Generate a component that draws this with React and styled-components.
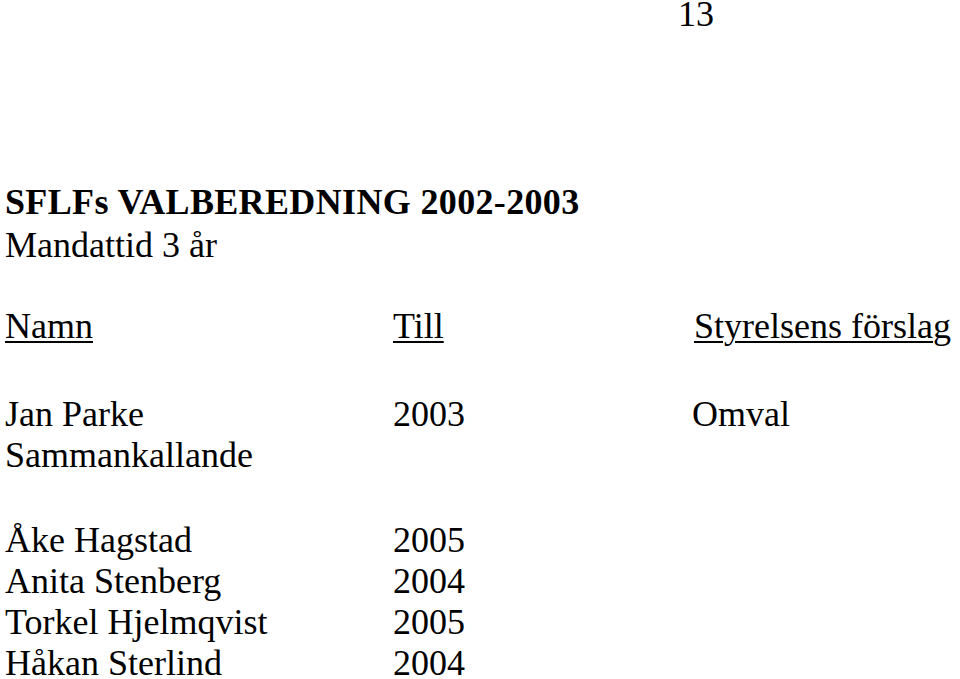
import React from "react";
import styled, { createGlobalStyle } from "styled-components";

const GlobalStyle = createGlobalStyle`
    html, body {
        margin: 0;
        padding: 0;
        background: #ffffff;
    }
    body {
        color: #000000;
        font-family: "Liberation Serif", "Times New Roman", serif;
        font-size: 36px;
        line-height: 41px;
        overflow: hidden;
    }
`;

const Page = styled("div")`
    height: 679px;
    overflow: hidden;
    padding-left: 5px;
    width: 955px;
`;

const PageNumber = styled("div")`
    margin-left: 673px;
    margin-top: -6px;
`;

const Title = styled("h1")`
    font-size: 36px;
    font-weight: bold;
    letter-spacing: 0.35px;
    line-height: 41px;
    margin: 147px 0 0 0;
`;

const Subtitle = styled("p")`
    margin: 2px 0 0 0;
`;

const Row = styled("div")`
    display: grid;
    grid-template-columns: 388px 299px auto;
    margin-top: ${(props) => props.gap || "0px"};
    white-space: nowrap;
`;

const Cell = styled("div")`
    padding-left: ${(props) => props.indent || "0px"};
`;

const HeadCell = styled(Cell)`
    text-decoration: underline;
    text-decoration-thickness: 2px;
    text-underline-offset: 3px;
`;

const ledamoter = [
    { namn: "Åke Hagstad", till: "2005" },
    { namn: "Anita Stenberg", till: "2004" },
    { namn: "Torkel Hjelmqvist", till: "2005" },
    { namn: "Håkan Sterlind", till: "2004" },
];

const App = () => {
    return (
        <>
            <GlobalStyle />
            <Page>
                <PageNumber>13</PageNumber>
                <Title>SFLFs VALBEREDNING 2002-2003</Title>
                <Subtitle>Mandattid 3 år</Subtitle>
                <Row gap="40px">
                    <HeadCell>Namn</HeadCell>
                    <HeadCell>Till</HeadCell>
                    <HeadCell indent="2px">Styrelsens förslag</HeadCell>
                </Row>
                <Row gap="47px">
                    <Cell>Jan Parke</Cell>
                    <Cell>2003</Cell>
                    <Cell>Omval</Cell>
                </Row>
                <Row>
                    <Cell>Sammankallande</Cell>
                    <Cell></Cell>
                    <Cell></Cell>
                </Row>
                {ledamoter.map((l, idx) => (
                    <Row key={idx} gap={idx === 0 ? "44px" : "0px"}>
                        <Cell>{l.namn}</Cell>
                        <Cell>{l.till}</Cell>
                        <Cell></Cell>
                    </Row>
                ))}
            </Page>
        </>
    );
};

export default App;
